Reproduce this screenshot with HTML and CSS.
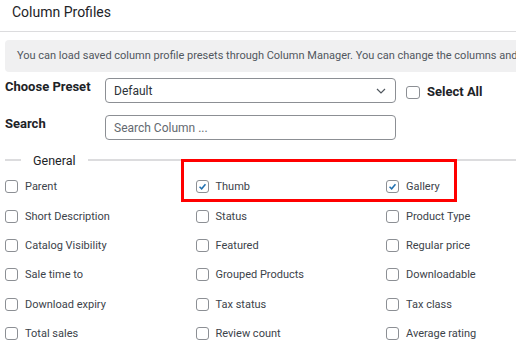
FILE: index.html
```html
<!DOCTYPE html>
<html lang="en">
<head>
  <meta charset="UTF-8">
  <title>Column Profiles</title>
  <link rel="stylesheet" href="styles.css">
</head>
<body>
  <div class="page">
    <h1 class="title">Column Profiles</h1>

    <div class="panel">
      <p class="notice">You can load saved column profile presets through Column Manager. You can change the columns and save them as a new preset.</p>

      <div class="field">
        <span class="field-label">Choose Preset</span>
        <div class="control">
          Default
          <svg class="chevron" width="10" height="6" viewBox="0 0 10 6"><path d="M1 1 L5 5 L9 1" fill="none" stroke="#50575e" stroke-width="1.2"/></svg>
        </div>
        <label class="select-all"><span class="box"></span>Select All</label>
      </div>

      <div class="field field-search">
        <span class="field-label">Search</span>
        <div class="control placeholder">Search Column ...</div>
      </div>

      <div class="group">
        <div class="group-head">
          <span class="line line-short"></span>
          <span class="group-name">General</span>
          <span class="line"></span>
        </div>

        <div class="columns">
          <div class="highlight"></div>

          <label class="item"><span class="box"></span>Parent</label>
          <label class="item"><span class="box checked"><svg width="13" height="13" viewBox="0 0 13 13"><path d="M3 6.8 L5.5 9.2 L10 3.8" fill="none" stroke="#2271b1" stroke-width="1.8"/></svg></span>Thumb</label>
          <label class="item"><span class="box checked"><svg width="13" height="13" viewBox="0 0 13 13"><path d="M3 6.8 L5.5 9.2 L10 3.8" fill="none" stroke="#2271b1" stroke-width="1.8"/></svg></span>Gallery</label>

          <label class="item"><span class="box"></span>Short Description</label>
          <label class="item"><span class="box"></span>Status</label>
          <label class="item"><span class="box"></span>Product Type</label>

          <label class="item"><span class="box"></span>Catalog Visibility</label>
          <label class="item"><span class="box"></span>Featured</label>
          <label class="item"><span class="box"></span>Regular price</label>

          <label class="item"><span class="box"></span>Sale time to</label>
          <label class="item"><span class="box"></span>Grouped Products</label>
          <label class="item"><span class="box"></span>Downloadable</label>

          <label class="item"><span class="box"></span>Download expiry</label>
          <label class="item"><span class="box"></span>Tax status</label>
          <label class="item"><span class="box"></span>Tax class</label>

          <label class="item"><span class="box"></span>Total sales</label>
          <label class="item"><span class="box"></span>Review count</label>
          <label class="item"><span class="box"></span>Average rating</label>
        </div>
      </div>
    </div>
  </div>
</body>
</html>
```
FILE: styles.css
```css
body {
  margin: 0;
  padding: 0;
  overflow: hidden;
  font-family: Roboto, "Liberation Sans", sans-serif;
  color: #3c434a;
  background: #fff;
}
.page {
  width: 800px;
}
.title {
  margin: 0;
  height: 32px;
  box-sizing: border-box;
  padding: 3px 12px 0;
  font-size: 14px;
  font-weight: 400;
  line-height: 18px;
  color: #1d2327;
  border-bottom: 1px solid #dcdcde;
}
.panel {
  padding: 8px 0 0 5px;
}
.notice {
  margin: 0;
  height: 32px;
  box-sizing: border-box;
  padding: 0 12px;
  line-height: 32px;
  background-color: #f0f0f1;
  border-radius: 4px;
  font-size: 11px;
  white-space: nowrap;
  color: #50575e;
}
.field {
  display: flex;
  align-items: center;
  height: 25px;
  margin-top: 6px;
}
.field-search {
  margin-top: 12px;
}
.field-label {
  align-self: flex-start;
  width: 100px;
  font-size: 13px;
  font-weight: bold;
  line-height: 18px;
  color: #1d2327;
}
.control {
  width: 291px;
  height: 25px;
  box-sizing: border-box;
  display: flex;
  align-items: center;
  justify-content: space-between;
  padding: 0 8px;
  border: 1px solid #8c8f94;
  border-radius: 4px;
  font-size: 12px;
  color: #2c3338;
}
.placeholder {
  color: #646970;
}
.chevron {
  margin-right: 1px;
}
.select-all {
  display: flex;
  align-items: center;
  gap: 7px;
  margin: 2px 0 0 10px;
  font-size: 13px;
  font-weight: bold;
  color: #1d2327;
}
.select-all .box {
  width: 14px;
  margin-top: 2px;
}
.box {
  display: inline-flex;
  align-items: center;
  justify-content: center;
  width: 13px;
  height: 13px;
  box-sizing: border-box;
  border: 1px solid #8c8f94;
  border-radius: 3px;
  background: #fff;
  flex-shrink: 0;
}
.box svg {
  display: block;
}
.group {
  margin-top: 12px;
}
.group-head {
  display: flex;
  align-items: center;
  height: 16px;
}
.line {
  flex: 1;
  height: 2px;
  background-color: #dcdcde;
}
.line-short {
  flex: none;
  width: 16px;
}
.group-name {
  padding: 0 12px;
  font-size: 12.5px;
  color: #1d2327;
}
.columns {
  position: relative;
  display: grid;
  grid-template-columns: repeat(3, 190.5px);
  grid-auto-rows: 29.4px;
  margin-top: 4px;
}
.item {
  display: flex;
  align-items: center;
  gap: 7px;
  font-size: 11px;
}
.highlight {
  position: absolute;
  left: 176px;
  top: -13px;
  width: 276px;
  height: 43px;
  box-sizing: border-box;
  border: 3px solid #ff0000;
}
```
